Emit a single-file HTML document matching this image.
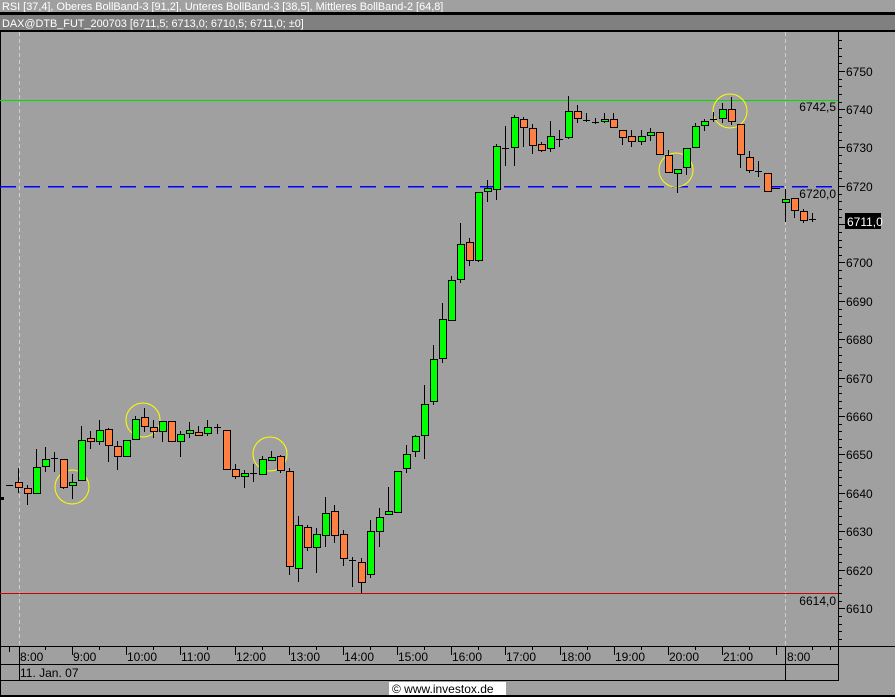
<!DOCTYPE html>
<html><head><meta charset="utf-8"><style>
html,body{margin:0;padding:0;background:#a0a0a0;}
body{width:895px;height:697px;overflow:hidden;position:relative;font-family:"Liberation Sans Narrow","Liberation Sans",sans-serif;}
svg{position:absolute;left:0;top:0;}
text{font-family:"Liberation Sans Narrow","Liberation Sans",sans-serif;font-size:12px;}
.g{fill:#00ff00;stroke:#000;stroke-width:1}
.o{fill:#ff8040;stroke:#000;stroke-width:1}
</style></head><body>
<svg width="895" height="697" viewBox="0 0 895 697" shape-rendering="crispEdges">
<rect x="0" y="0" width="895" height="697" fill="#a0a0a0"/>
<rect x="0" y="0" width="895" height="12" fill="#a0a0a0"/>
<text x="2" y="10" fill="#fff" style="font-size:10.9px">RSI [37,4],  Oberes BollBand-3 [91,2],  Unteres BollBand-3 [38,5],  Mittleres BollBand-2 [64,8]</text>
<rect x="0" y="12" width="895" height="3" fill="#000"/>
<rect x="0" y="15" width="895" height="15" fill="#808080"/>
<text x="2" y="27" fill="#fff" style="font-size:10.9px">DAX@DTB_FUT_200703 [6711,5; 6713,0; 6710,5; 6711,0; ±0]</text>
<rect x="0" y="30" width="895" height="2" fill="#000"/>
<rect x="0" y="32" width="1" height="665" fill="#000"/>
<rect x="0" y="497" width="4" height="3" fill="#000"/>
<line x1="19.5" y1="32" x2="19.5" y2="646" stroke="#d0d0d0" stroke-dasharray="4,3"/>
<line x1="785.5" y1="32" x2="785.5" y2="646" stroke="#d0d0d0" stroke-dasharray="4,3"/>
<line x1="0" y1="100.5" x2="838" y2="100.5" stroke="#00e000" stroke-width="0.6"/>
<line x1="0" y1="593.5" x2="838" y2="593.5" stroke="#d00000"/>
<line x1="0" y1="186.5" x2="838" y2="186.5" stroke="#0000ff" stroke-width="1.5" stroke-dasharray="16,8"/>
<g fill="none" stroke="#ffff00" stroke-width="1" shape-rendering="auto">
<circle cx="72" cy="487" r="17"/><circle cx="143" cy="420" r="17"/><circle cx="270" cy="454" r="17"/><circle cx="676" cy="170" r="17"/><circle cx="730" cy="111" r="17"/>
</g>
<path stroke="#000" stroke-width="1.3" fill="none" d="M6 485.5H13M18.5 468V493M27.5 485V505M36.5 449V493M45.5 447V472M54.5 452V472M51 458.5H58M63.5 459V489M72.5 474V499M81.5 426V480M90.5 431V449M99.5 420V445M108.5 428V462M117.5 441V470M126.5 440V456M135.5 416V439M144.5 408V432M153.5 420V438M162.5 421V442M171.5 421V441M180.5 431V457M189.5 422V438M198.5 426V436M207.5 420V436M217.5 424V434M214 427.5H221M226.5 430V469M235.5 464V479M244.5 470V488M253.5 464V482M250 473.5H257M262.5 456V475M271.5 451V460M280.5 455V473M289.5 468V575M298.5 516V582M307.5 525V551M316.5 528V573M325.5 497V547M334.5 505V543M343.5 530V566M352.5 557V587M349 560.5H356M361.5 558V593M370.5 520V578M379.5 508V547M388.5 487V515M397.5 471V512M406.5 445V473M415.5 435V457M424.5 385V459M433.5 345V405M442.5 303V363M451.5 276V320M460.5 223V283M469.5 238V266M478.5 192V262M487.5 180V202M496.5 144V200M505.5 126V166M502 148.5H509M514.5 115V166M523.5 117V147M532.5 124V154M541.5 142V152M550.5 121V152M559.5 130V147M556 139.5H563M568.5 96V139M577.5 105V123M586.5 113V122M583 120.5H590M595.5 118V124M592 122.5H599M604.5 113V123M613.5 113V127M622.5 130V145M631.5 130V147M641.5 130V145M650.5 128V141M659.5 132V154M668.5 150V173M677.5 169V193M686.5 148V175M695.5 123V147M704.5 119V131M713.5 112V122M710 119.5H717M722.5 103V123M731.5 97V125M740.5 124V168M749.5 151V173M758.5 161V177M755 171.5H762M767.5 173V191M772 188.5H780M785.5 189V222M794.5 198V218M803.5 209V223M812.5 213V222M809 219.5H816"/>
<g>
<rect class="o" x="15.5" y="482.5" width="7" height="5"/>
<rect class="o" x="24.5" y="488.5" width="7" height="5"/>
<rect class="g" x="33.5" y="467.5" width="7" height="26"/>
<rect class="g" x="42.5" y="459.5" width="7" height="7"/>
<rect class="o" x="60.5" y="459.5" width="7" height="28"/>
<rect class="g" x="69.5" y="482.5" width="7" height="3"/>
<rect class="g" x="78.5" y="440.5" width="7" height="40"/>
<rect class="o" x="87.5" y="438.5" width="7" height="3"/>
<rect class="g" x="96.5" y="430.5" width="7" height="11"/>
<rect class="o" x="105.5" y="429.5" width="7" height="16"/>
<rect class="o" x="114.5" y="446.5" width="7" height="10"/>
<rect class="g" x="123.5" y="440.5" width="7" height="16"/>
<rect class="g" x="132.5" y="419.5" width="7" height="20"/>
<rect class="o" x="141.5" y="417.5" width="7" height="9"/>
<rect class="o" x="150.5" y="427.5" width="7" height="4"/>
<rect class="g" x="159.5" y="421.5" width="7" height="10"/>
<rect class="o" x="168.5" y="421.5" width="7" height="20"/>
<rect class="g" x="177.5" y="434.5" width="7" height="7"/>
<rect class="g" x="186.5" y="430.5" width="7" height="3"/>
<rect class="o" x="195.5" y="432.5" width="7" height="3"/>
<rect class="g" x="204.5" y="427.5" width="7" height="6"/>
<rect class="o" x="223.5" y="430.5" width="7" height="39"/>
<rect class="o" x="232.5" y="469.5" width="7" height="7"/>
<rect class="g" x="241.5" y="473.5" width="7" height="3"/>
<rect class="g" x="259.5" y="459.5" width="7" height="15"/>
<rect class="g" x="268.5" y="457.5" width="7" height="3"/>
<rect class="o" x="277.5" y="456.5" width="7" height="14"/>
<rect class="o" x="286.5" y="471.5" width="7" height="95"/>
<rect class="g" x="295.5" y="525.5" width="7" height="43"/>
<rect class="o" x="304.5" y="527.5" width="7" height="20"/>
<rect class="g" x="313.5" y="534.5" width="7" height="13"/>
<rect class="g" x="322.5" y="513.5" width="7" height="22"/>
<rect class="o" x="331.5" y="511.5" width="7" height="24"/>
<rect class="o" x="340.5" y="534.5" width="7" height="24"/>
<rect class="o" x="358.5" y="562.5" width="7" height="20"/>
<rect class="g" x="367.5" y="531.5" width="7" height="43"/>
<rect class="g" x="376.5" y="517.5" width="7" height="14"/>
<rect class="g" x="385.5" y="511.5" width="7" height="3"/>
<rect class="g" x="394.5" y="471.5" width="7" height="41"/>
<rect class="g" x="403.5" y="454.5" width="7" height="14"/>
<rect class="g" x="412.5" y="436.5" width="7" height="15"/>
<rect class="g" x="421.5" y="404.5" width="7" height="31"/>
<rect class="g" x="430.5" y="359.5" width="7" height="42"/>
<rect class="g" x="439.5" y="319.5" width="7" height="39"/>
<rect class="g" x="448.5" y="280.5" width="7" height="40"/>
<rect class="g" x="457.5" y="244.5" width="7" height="35"/>
<rect class="o" x="466.5" y="242.5" width="7" height="18"/>
<rect class="g" x="475.5" y="192.5" width="7" height="68"/>
<rect class="g" x="484.5" y="188.5" width="7" height="3"/>
<rect class="g" x="493.5" y="146.5" width="7" height="43"/>
<rect class="g" x="511.5" y="117.5" width="7" height="30"/>
<rect class="o" x="520.5" y="119.5" width="7" height="8"/>
<rect class="o" x="529.5" y="128.5" width="7" height="17"/>
<rect class="o" x="538.5" y="144.5" width="7" height="6"/>
<rect class="g" x="547.5" y="136.5" width="7" height="12"/>
<rect class="g" x="565.5" y="111.5" width="7" height="26"/>
<rect class="o" x="574.5" y="111.5" width="7" height="7"/>
<rect class="g" x="601.5" y="119.5" width="7" height="2"/>
<rect class="o" x="610.5" y="119.5" width="7" height="8"/>
<rect class="o" x="619.5" y="130.5" width="7" height="7"/>
<rect class="o" x="628.5" y="136.5" width="7" height="5"/>
<rect class="g" x="638.5" y="136.5" width="7" height="5"/>
<rect class="g" x="647.5" y="132.5" width="7" height="3"/>
<rect class="o" x="656.5" y="132.5" width="7" height="22"/>
<rect class="o" x="665.5" y="155.5" width="7" height="17"/>
<rect class="g" x="674.5" y="169.5" width="7" height="4"/>
<rect class="g" x="683.5" y="148.5" width="7" height="19"/>
<rect class="g" x="692.5" y="126.5" width="7" height="21"/>
<rect class="g" x="701.5" y="121.5" width="7" height="4"/>
<rect class="g" x="719.5" y="109.5" width="7" height="9"/>
<rect class="o" x="728.5" y="109.5" width="7" height="12"/>
<rect class="o" x="737.5" y="124.5" width="7" height="30"/>
<rect class="o" x="746.5" y="157.5" width="7" height="13"/>
<rect class="o" x="764.5" y="173.5" width="7" height="18"/>
<rect class="g" x="782.5" y="199.5" width="7" height="3"/>
<rect class="o" x="791.5" y="198.5" width="7" height="12"/>
<rect class="o" x="800.5" y="211.5" width="7" height="9"/>
</g>
<text x="836" y="111" text-anchor="end" fill="#000">6742,5</text>
<text x="836" y="198" text-anchor="end" fill="#000">6720,0</text>
<text x="836" y="605" text-anchor="end" fill="#000">6614,0</text>
<rect x="838" y="32" width="1" height="614" fill="#000"/>
<path stroke="#000" fill="none" d="M838 71.5H845M838 109.5H845M838 147.5H845M838 186.5H845M838 224.5H845M838 262.5H845M838 301.5H845M838 339.5H845M838 378.5H845M838 416.5H845M838 454.5H845M838 493.5H845M838 531.5H845M838 570.5H845M838 608.5H845"/>
<path stroke="#000" fill="none" d="M838 40.5H842M838 48.5H842M838 56.5H842M838 63.5H842M838 79.5H842M838 86.5H842M838 94.5H842M838 102.5H842M838 117.5H842M838 125.5H842M838 132.5H842M838 140.5H842M838 155.5H842M838 163.5H842M838 171.5H842M838 178.5H842M838 194.5H842M838 201.5H842M838 209.5H842M838 217.5H842M838 232.5H842M838 240.5H842M838 247.5H842M838 255.5H842M838 270.5H842M838 278.5H842M838 286.5H842M838 293.5H842M838 309.5H842M838 316.5H842M838 324.5H842M838 332.5H842M838 347.5H842M838 355.5H842M838 362.5H842M838 370.5H842M838 386.5H842M838 393.5H842M838 401.5H842M838 408.5H842M838 424.5H842M838 431.5H842M838 439.5H842M838 447.5H842M838 462.5H842M838 470.5H842M838 477.5H842M838 485.5H842M838 501.5H842M838 508.5H842M838 516.5H842M838 524.5H842M838 539.5H842M838 547.5H842M838 554.5H842M838 562.5H842M838 578.5H842M838 585.5H842M838 593.5H842M838 601.5H842M838 616.5H842M838 624.5H842M838 631.5H842M838 639.5H842"/>
<g fill="#000">
<text x="846" y="76">6750</text><text x="846" y="114">6740</text><text x="846" y="152">6730</text><text x="846" y="191">6720</text>
<text x="846" y="267">6700</text><text x="846" y="306">6690</text><text x="846" y="344">6680</text><text x="846" y="383">6670</text>
<text x="846" y="421">6660</text><text x="846" y="459">6650</text><text x="846" y="498">6640</text><text x="846" y="536">6630</text>
<text x="846" y="575">6620</text><text x="846" y="613">6610</text>
</g>
<rect x="845" y="213" width="36" height="16" fill="#000"/>
<text x="847" y="226" fill="#fff">6711,0</text>
<rect x="0" y="646" width="895" height="1" fill="#000"/>
<rect x="0" y="664" width="838" height="1" fill="#000"/>
<rect x="0" y="680" width="838" height="1" fill="#000"/>
<rect x="838" y="646" width="1" height="35" fill="#000"/>
<rect x="785" y="646" width="1" height="35" fill="#000"/>
<rect x="19" y="646" width="1" height="35" fill="#000"/>
<rect x="0" y="695" width="895" height="2" fill="#000"/>
<path stroke="#000" fill="none" d="M9.5 646V652M72.5 646V655M126.5 646V655M180.5 646V655M235.5 646V655M289.5 646V655M343.5 646V655M397.5 646V655M451.5 646V655M505.5 646V655M560.5 646V655M614.5 646V655M668.5 646V655M722.5 646V655M776.5 646V655M45.5 646V650M99.5 646V650M153.5 646V650M207.5 646V650M262.5 646V650M316.5 646V650M370.5 646V650M424.5 646V650M478.5 646V650M532.5 646V650M587.5 646V650M641.5 646V650M695.5 646V650M749.5 646V650M812.5 646V650M830.5 646V650"/>
<g fill="#000" style="font-size:12px">
<text x="20" y="661">8:00</text><text x="73" y="661">9:00</text><text x="127" y="661">10:00</text><text x="181" y="661">11:00</text>
<text x="236" y="661">12:00</text><text x="290" y="661">13:00</text><text x="344" y="661">14:00</text><text x="398" y="661">15:00</text>
<text x="452" y="661">16:00</text><text x="506" y="661">17:00</text><text x="561" y="661">18:00</text><text x="615" y="661">19:00</text>
<text x="669" y="661">20:00</text><text x="723" y="661">21:00</text><text x="787" y="661">8:00</text>
<text x="20" y="677">11. Jan. 07</text>
</g>
<rect x="389" y="682" width="117" height="13" fill="#fff"/>
<text x="392" y="693" fill="#000" style="font-size:12px">© www.investox.de</text>
</svg>
</body></html>
